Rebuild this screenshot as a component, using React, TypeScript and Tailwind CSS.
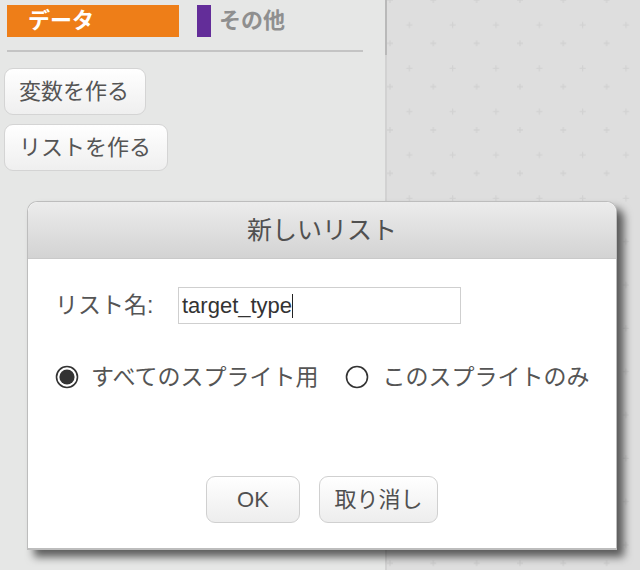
import { ReactNode } from 'react';

function PaletteButton({ children }: { children: ReactNode }) {
    return (
        <button className="h-[47px] pl-[14px] pr-[16px] rounded-[9px] border border-[#d4d4d4] bg-linear-to-b from-white to-[#efefef] text-[22px] leading-none text-[#555]">
            {children}
        </button>
    );
}

function DialogButton({ children, width }: { children: ReactNode; width: string }) {
    return (
        <button
            className={`${width} h-[47px] rounded-[9px] border border-[#d0d0d0] bg-linear-to-b from-white to-[#ededed] text-[22px] leading-none text-[#505050]`}
        >
            {children}
        </button>
    );
}

function Radio({ checked }: { checked: boolean }) {
    return (
        <svg width="24" height="24" viewBox="0 0 24 24" className="shrink-0">
            <circle cx="12" cy="12" r="10.5" fill="white" stroke="#333" strokeWidth="1.6" />
            {checked && <circle cx="12" cy="12" r="7.6" fill="#333" />}
        </svg>
    );
}

export default function App() {
    return (
        <div className="relative w-[640px] h-[570px] overflow-hidden flex bg-[#dedede] font-['Liberation_Sans','Noto_Sans_CJK_JP',sans-serif]">
            {/* Block palette */}
            <aside className="w-[385px] h-full bg-[#e6e7e6] flex flex-col">
                <div className="flex items-center h-[32px] mt-[5px] pl-[7px]">
                    <div className="w-[172px] h-full bg-[#ee7e18] pl-[21px] flex items-center text-white font-bold text-[22px] leading-none">
                        データ
                    </div>
                    <div className="ml-[18px] w-[14px] h-full bg-[#632d99]" />
                    <span className="ml-[8px] text-[22px] font-bold leading-none text-[#8f8f8f]">その他</span>
                </div>
                <div className="mt-[13px] ml-[7px] w-[356px] h-[2px] bg-[#c4c4c4]" />
                <div className="mt-[16px] ml-[4px] flex flex-col items-start gap-[9px]">
                    <PaletteButton>変数を作る</PaletteButton>
                    <PaletteButton>リストを作る</PaletteButton>
                </div>
            </aside>

            {/* Scrollbar */}
            <div className="w-[2px] h-full bg-[#d2d2d2] flex flex-col">
                <div className="h-[55px] bg-[#b9b9b9]" />
            </div>

            {/* Script canvas */}
            <div className="flex-1 h-full">
                <svg width="100%" height="100%">
                    <defs>
                        <pattern id="grid" x="-18.67" y="-21.67" width="43.33" height="43.33" patternUnits="userSpaceOnUse">
                            <path
                                d="M18.67 21.67h6M21.67 18.67v6M38 3.3h6M41 0.3v6M-5.3 3.3h6M-2.3 0.3v6"
                                stroke="#d2d2d2"
                                strokeWidth="1.3"
                            />
                        </pattern>
                    </defs>
                    <rect width="100%" height="100%" fill="url(#grid)" />
                </svg>
            </div>

            {/* New list dialog */}
            <div className="absolute left-[27px] top-[201px] w-[590px] h-[349px] flex flex-col rounded-t-[10px] border border-[#bdbdbd] border-b-2 bg-white shadow-[7px_7px_9px_rgba(0,0,0,0.6)]">
                <div className="h-[57px] shrink-0 rounded-t-[10px] bg-linear-to-b from-[#ececec] to-[#d3d3d3] border-b border-[#c9c9c9] flex items-center justify-center">
                    <span className="text-[25px] leading-none text-[#505050]">新しいリスト</span>
                </div>
                <div className="flex-1 flex flex-col pl-[27px] pt-[28px] pb-[25px]">
                    <div className="flex items-center h-[37px]">
                        <span className="w-[123px] text-[23px] leading-none text-[#555]">リスト名:</span>
                        <div className="w-[283px] h-[37px] border border-[#cfcfcf] flex items-center pl-[3px] text-[22px] leading-none text-[#333]">
                            target_type
                            <span className="w-px h-[24px] bg-[#222]" />
                        </div>
                    </div>
                    <div className="mt-[41px] flex items-center h-[24px] text-[23px] leading-none text-[#555]">
                        <Radio checked />
                        <span className="ml-[12px]">すべてのスプライト用</span>
                        <span className="ml-[27px]">
                            <Radio checked={false} />
                        </span>
                        <span className="ml-[13px]">このスプライトのみ</span>
                    </div>
                    <div className="mt-auto flex justify-center gap-[19px] pr-[27px]">
                        <DialogButton width="w-[94px]">OK</DialogButton>
                        <DialogButton width="w-[119px]">取り消し</DialogButton>
                    </div>
                </div>
            </div>
        </div>
    );
}
